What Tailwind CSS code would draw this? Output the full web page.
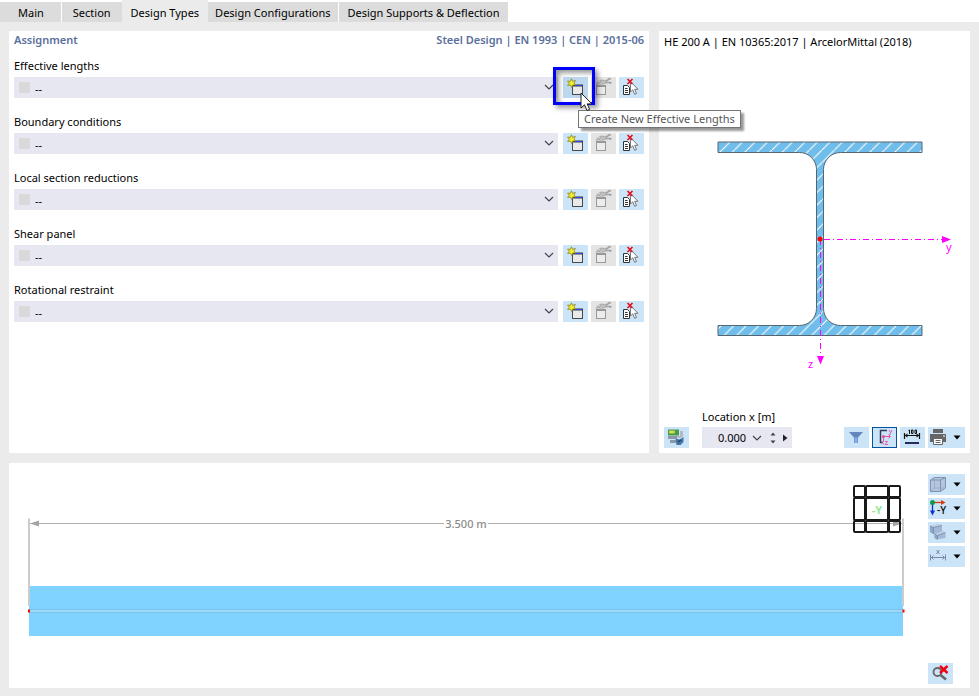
<!DOCTYPE html>
<html lang="en">
<head>
<meta charset="utf-8"/>
<meta name="viewport" content="width=device-width, initial-scale=1"/>
<title>Edit Member - Design Types</title>
<script src="https://cdn.jsdelivr.net/npm/@tailwindcss/browser@4"></script>
</head>
<body class="flex min-h-screen flex-col bg-[#ebebeb] font-['Noto_Sans','Open_Sans',sans-serif] text-[11px] leading-4 text-black">

<!-- shared icons -->
<svg class="hidden" xmlns="http://www.w3.org/2000/svg">
  <symbol id="i-new" viewBox="0 0 25 21">
    <rect x="9.5" y="8.5" width="10" height="9" fill="#e9e9e9" stroke="#4a4a4a"/>
    <path d="M9 8.500h11" stroke="#3a3a4a" stroke-width="2"/>
    <path d="M12 8.500h7" stroke="#3048d8"/>
    <path d="M8.500 1.800l1.100 2.600 2.800-1-1.400 2.600 1.800 2-2.900-.1-1.200 2.600-1.200-2.500-2.900.5 1.700-2.300-1.800-2.200 2.900.4z" fill="#f8f020" stroke="#85852a" stroke-width=".8"/>
  </symbol>
  <symbol id="i-edit" viewBox="0 0 25 21">
    <rect x="5.5" y="9.5" width="9" height="8" fill="#ececec" stroke="#9a9a9a"/>
    <path d="M5 9h10" stroke="#999" stroke-width="2"/>
    <path d="M4.500 7.500l2-3 3.500-2 3.500.6 2 1v2l-2.500 1.400H6z" fill="#b0b0b0"/>
    <path d="M14.500 3.500h2l1-1.500h2.500M15 5.500h4.500v1.500" stroke="#a0a0a0" stroke-width="1.500" fill="none"/>
    <path d="M7 6l2-2M9.500 6.500l2-2.500M12 6.500l1.500-2" stroke="#e6e6e6" stroke-width=".8"/>
  </symbol>
  <symbol id="i-remove" viewBox="0 0 25 21">
    <path d="M4.500 8.500h4l2 2v7h-6z" fill="#fff" stroke="#333"/>
    <path d="M6 11.500h2.500M6 13.500h3M6 15.500h3" stroke="#333"/>
    <path d="M11.500 4.500v10.500l2.300-2.200 1.800 4.500 1.900-.8-1.800-4.200h3.300z" fill="#fff" stroke="#777"/>
    <path d="M8.500 2l5 5M13.500 2l-5 5" stroke="#e01020" stroke-width="1.700"/>
  </symbol>
  <symbol id="i-chevron" viewBox="0 0 10 6">
    <path d="M1 1l4 4 4-4" fill="none" stroke="#444" stroke-width="1.200"/>
  </symbol>
  <symbol id="i-down" viewBox="0 0 8 5">
    <path d="M.500.500h7L4 4.500z" fill="#000"/>
  </symbol>
</svg>

<nav class="flex h-[22px] items-end gap-px bg-white">
  <a href="#" class="h-5 bg-[#dcdcdc] pr-[17px] pl-[18px] pt-[3px] whitespace-nowrap">Main</a>
  <a href="#" class="h-5 bg-[#dcdcdc] px-[11px] pt-[3px] whitespace-nowrap">Section</a>
  <a href="#" aria-current="page" class="-mx-px h-[22px] bg-[#ebebeb] px-[9px] pt-[5px] whitespace-nowrap">Design Types</a>
  <a href="#" class="h-5 bg-[#dcdcdc] px-[7px] pt-[3px] whitespace-nowrap">Design Configurations</a>
  <a href="#" class="h-5 bg-[#dcdcdc] px-[9px] pt-[3px] whitespace-nowrap">Design Supports &amp; Deflection</a>
</nav>

<main class="grid flex-1 grid-cols-[1fr_311px] grid-rows-[422px_1fr] gap-[10px] px-[9px] pt-[9px] pb-2">

  <section class="bg-white px-[5px]">
    <div class="flex h-6 justify-between font-semibold leading-[18px] text-[#5a6f9c]">
      <h2>Assignment</h2>
      <p>Steel Design | EN 1993 | CEN | 2015-06</p>
    </div>

    <div class="h-14">
      <label for="lengths" class="block h-[22px] leading-[22px]">Effective lengths</label>
      <div class="flex h-[21px] gap-[3px]">
        <div class="relative mr-[2px] flex-1">
          <select id="lengths" class="block h-[21px] w-full appearance-none bg-[#e7e7f2] pt-[2px] pl-[21px]"><option>--</option></select>
          <span class="pointer-events-none absolute top-[5px] left-[5px] size-[11px] bg-[#d9d9d9]"></span>
          <svg class="pointer-events-none absolute top-[7px] right-1 h-[6px] w-[10px]"><use href="#i-chevron"/></svg>
        </div>
        <div class="relative z-10">
          <button type="button" aria-label="Create New Effective Lengths" aria-describedby="tip" class="block h-[21px] w-[25px] bg-[#bdd8ee]"><svg class="h-[21px] w-[25px]"><use href="#i-new"/></svg></button>
          <span class="pointer-events-none absolute -top-[10px] -right-[7px] -bottom-[7px] -left-[10px] border-3 border-[#0000fa] shadow-[3px_3px_5px_rgba(0,0,0,0.4),inset_3px_3px_5px_rgba(0,0,0,0.4)]"></span>
          <span id="tip" role="tooltip" class="absolute top-[33px] left-[15px] border border-[#767676] bg-white px-[5px] leading-4 whitespace-nowrap text-[#575757] shadow-[3px_3px_2px_rgba(0,0,0,0.4)]">Create New Effective Lengths</span>
          <svg class="pointer-events-none absolute top-[15px] left-[17px] h-5 w-[14px]" viewBox="0 0 14 20"><path d="M1 1v15l3.500-3.200L7 18.500l2.600-1.100-2.400-5.500H12z" fill="#fff" stroke="#222"/></svg>
        </div>
        <button type="button" aria-label="Edit effective lengths" disabled class="h-[21px] w-[25px] bg-[#e4e4e4]"><svg class="h-[21px] w-[25px]"><use href="#i-edit"/></svg></button>
        <button type="button" aria-label="Remove effective lengths" class="h-[21px] w-[25px] bg-[#cce4f7]"><svg class="h-[21px] w-[25px]"><use href="#i-remove"/></svg></button>
      </div>
    </div>

    <div class="h-14">
      <label for="boundary" class="block h-[22px] leading-[22px]">Boundary conditions</label>
      <div class="flex h-[21px] gap-[3px]">
        <div class="relative mr-[2px] flex-1">
          <select id="boundary" class="block h-[21px] w-full appearance-none bg-[#e7e7f2] pt-[2px] pl-[21px]"><option>--</option></select>
          <span class="pointer-events-none absolute top-[5px] left-[5px] size-[11px] bg-[#d9d9d9]"></span>
          <svg class="pointer-events-none absolute top-[7px] right-1 h-[6px] w-[10px]"><use href="#i-chevron"/></svg>
        </div>
        <button type="button" aria-label="New boundary conditions" class="h-[21px] w-[25px] bg-[#cce4f7]"><svg class="h-[21px] w-[25px]"><use href="#i-new"/></svg></button>
        <button type="button" aria-label="Edit boundary conditions" disabled class="h-[21px] w-[25px] bg-[#e4e4e4]"><svg class="h-[21px] w-[25px]"><use href="#i-edit"/></svg></button>
        <button type="button" aria-label="Remove boundary conditions" class="h-[21px] w-[25px] bg-[#cce4f7]"><svg class="h-[21px] w-[25px]"><use href="#i-remove"/></svg></button>
      </div>
    </div>

    <div class="h-14">
      <label for="reductions" class="block h-[22px] leading-[22px]">Local section reductions</label>
      <div class="flex h-[21px] gap-[3px]">
        <div class="relative mr-[2px] flex-1">
          <select id="reductions" class="block h-[21px] w-full appearance-none bg-[#e7e7f2] pt-[2px] pl-[21px]"><option>--</option></select>
          <span class="pointer-events-none absolute top-[5px] left-[5px] size-[11px] bg-[#d9d9d9]"></span>
          <svg class="pointer-events-none absolute top-[7px] right-1 h-[6px] w-[10px]"><use href="#i-chevron"/></svg>
        </div>
        <button type="button" aria-label="New local section reductions" class="h-[21px] w-[25px] bg-[#cce4f7]"><svg class="h-[21px] w-[25px]"><use href="#i-new"/></svg></button>
        <button type="button" aria-label="Edit local section reductions" disabled class="h-[21px] w-[25px] bg-[#e4e4e4]"><svg class="h-[21px] w-[25px]"><use href="#i-edit"/></svg></button>
        <button type="button" aria-label="Remove local section reductions" class="h-[21px] w-[25px] bg-[#cce4f7]"><svg class="h-[21px] w-[25px]"><use href="#i-remove"/></svg></button>
      </div>
    </div>

    <div class="h-14">
      <label for="shear" class="block h-[22px] leading-[22px]">Shear panel</label>
      <div class="flex h-[21px] gap-[3px]">
        <div class="relative mr-[2px] flex-1">
          <select id="shear" class="block h-[21px] w-full appearance-none bg-[#e7e7f2] pt-[2px] pl-[21px]"><option>--</option></select>
          <span class="pointer-events-none absolute top-[5px] left-[5px] size-[11px] bg-[#d9d9d9]"></span>
          <svg class="pointer-events-none absolute top-[7px] right-1 h-[6px] w-[10px]"><use href="#i-chevron"/></svg>
        </div>
        <button type="button" aria-label="New shear panel" class="h-[21px] w-[25px] bg-[#cce4f7]"><svg class="h-[21px] w-[25px]"><use href="#i-new"/></svg></button>
        <button type="button" aria-label="Edit shear panel" disabled class="h-[21px] w-[25px] bg-[#e4e4e4]"><svg class="h-[21px] w-[25px]"><use href="#i-edit"/></svg></button>
        <button type="button" aria-label="Remove shear panel" class="h-[21px] w-[25px] bg-[#cce4f7]"><svg class="h-[21px] w-[25px]"><use href="#i-remove"/></svg></button>
      </div>
    </div>

    <div class="h-14">
      <label for="restraint" class="block h-[22px] leading-[22px]">Rotational restraint</label>
      <div class="flex h-[21px] gap-[3px]">
        <div class="relative mr-[2px] flex-1">
          <select id="restraint" class="block h-[21px] w-full appearance-none bg-[#e7e7f2] pt-[2px] pl-[21px]"><option>--</option></select>
          <span class="pointer-events-none absolute top-[5px] left-[5px] size-[11px] bg-[#d9d9d9]"></span>
          <svg class="pointer-events-none absolute top-[7px] right-1 h-[6px] w-[10px]"><use href="#i-chevron"/></svg>
        </div>
        <button type="button" aria-label="New rotational restraint" class="h-[21px] w-[25px] bg-[#cce4f7]"><svg class="h-[21px] w-[25px]"><use href="#i-new"/></svg></button>
        <button type="button" aria-label="Edit rotational restraint" disabled class="h-[21px] w-[25px] bg-[#e4e4e4]"><svg class="h-[21px] w-[25px]"><use href="#i-edit"/></svg></button>
        <button type="button" aria-label="Remove rotational restraint" class="h-[21px] w-[25px] bg-[#cce4f7]"><svg class="h-[21px] w-[25px]"><use href="#i-remove"/></svg></button>
      </div>
    </div>
  </section>

  <section class="flex flex-col bg-white px-[5px] pb-[5px]">
    <h2 class="h-[22px] leading-[22px]">HE 200 A | EN 10365:2017 | ArcelorMittal (2018)</h2>

    <!-- cross-section -->
    <svg class="min-h-0 w-full flex-1" viewBox="664 53 301 354" fill="none">
      <defs>
        <pattern id="hatch" x="9.500" y="0" width="12.500" height="12.500" patternUnits="userSpaceOnUse">
          <rect width="12.500" height="12.500" fill="#6fbdea"/>
          <path d="M-1 13.500L13.500-1" stroke="#fff" stroke-width="1.100"/>
        </pattern>
      </defs>
      <path d="M718 142h204v10.500H840.500a17 17 0 0 0-17 17V308.500a17 17 0 0 0 17 17H922V335.500H718V325.500h81.500a17 17 0 0 0 17-17V169.500a17 17 0 0 0-17-17H718z" fill="url(#hatch)" stroke="#566670"/>
      <path d="M824 239.500h120" stroke="#f0f" stroke-dasharray="6 3 1 3"/>
      <path d="M820.500 239v118" stroke="#f0f" stroke-dasharray="6 3 1 3"/>
      <path d="M942 236l9 3.500-9 3.500zM817 356h7l-3.500 8.500z" fill="#f0f"/>
      <circle cx="820" cy="239" r="2.500" fill="#f00"/>
      <g class="text-[11px]" fill="#f0f"><text x="946" y="251">y</text><text x="808" y="368">z</text></g>
    </svg>

    <div class="flex items-end">
      <button type="button" aria-label="Section values" class="h-[21px] w-[25px] bg-[#cce4f7]">
        <svg class="h-[21px] w-[25px]" viewBox="0 0 25 21"><path d="M4 2.500h11v6H4z" fill="#4a9a4a"/><path d="M5 3.500h6v3H5z" fill="#b6d45a"/><path d="M6 5h3" stroke="#e9db43" stroke-width="2"/><path d="M4 9h9v3H4zM6 13h6v3H6z" fill="#8b98a5"/><path d="M16 4h3v6h-3zM13 9h4v2h-4z" fill="#aebac6"/><path d="M11.500 11.500l4 1 4-2.500v5l-3 3h-4z" fill="#4675aa"/><path d="M14 15l3-2" stroke="#1d3f6b" stroke-width="1.500"/></svg>
      </button>
      <div class="ml-[13px]">
        <label for="location" class="block h-5 leading-5">Location x [m]</label>
        <div class="flex h-[21px] w-[90px] items-center bg-[#e7e7f2]">
          <input id="location" type="text" value="0.000" autofocus class="w-12 pl-4 pt-px outline-none"/>
          <button type="button" aria-label="Choose location" class="ml-[2px]"><svg class="h-[6px] w-[10px]"><use href="#i-chevron"/></svg></button>
          <button type="button" aria-label="Step location" class="ml-[7px]"><svg class="h-[14px] w-2" viewBox="0 0 8 14"><path d="M4 1.500L6.500 4.500h-5zM4 12.500L1.500 9.500h5z" fill="#444"/></svg></button>
          <button type="button" aria-label="Next location" class="ml-[5px]"><svg class="h-2 w-[6px]" viewBox="0 0 6 8"><path d="M1 .500l4.500 3.500L1 7.500z" fill="#222"/></svg></button>
        </div>
      </div>
      <div class="ml-auto flex gap-[3px]">
        <button type="button" aria-label="Filter" class="h-[21px] w-[25px] bg-[#cce4f7]">
          <svg class="h-[21px] w-[25px]" viewBox="0 0 25 21"><path d="M5 5h14l-5 5.500V16h-4v-5.500z" fill="#6487bd"/><path d="M10.500 10.500h3V16h-3z" fill="#8dace6"/></svg>
        </button>
        <button type="button" aria-label="Show axes" aria-pressed="true" class="h-[21px] w-[25px] border border-[#0054a0] bg-[#cce4f7]">
          <svg class="h-[19px] w-[23px]" viewBox="1 1 23 19" fill="none"><path d="M15 3.500H8.500v12H11" stroke="#333a60" stroke-width="1.500"/><path d="M11.500 15V9.500H18M16.500 7.500l2 2-2 2" stroke="#e0559c"/><circle cx="11.500" cy="9.500" r="1.600" fill="#e0559c"/><path d="M17 3l1.500 2.500M20 3l-2.500 5M10 14.500l1.500 3M13 14.500h2.500l-2.500 3h3" stroke="#e0559c" stroke-width=".9"/></svg>
        </button>
        <button type="button" aria-label="Show dimensions" class="h-[21px] w-[25px] bg-[#cce4f7]">
          <svg class="h-[21px] w-[25px]" viewBox="0 0 25 21" fill="none"><path d="M5 8.500h14M4.500 6v6M19.500 6v6" stroke="#111" stroke-width="1.200"/><path d="M4.500 8.500l3-2v4zM19.500 8.500l-3-2v4z" fill="#111"/><path d="M5 16h14" stroke="#262a5c" stroke-width="2"/><path d="M8.500 3.500l1-.5v4M11.500 3H13v3.500h-1.500zM15 3h1.500v3.500H15z" stroke="#111"/></svg>
        </button>
        <button type="button" aria-label="Print" aria-haspopup="menu" class="flex h-[21px] w-[37px] items-center bg-[#cce4f7]">
          <svg class="h-[21px] w-[25px]" viewBox="0 0 25 21"><path d="M5 2h10v4H5zM2 7h16v8h-3v-3H5v3H2z" fill="#666"/><path d="M5.500 11.500h9v6h-9z" fill="#fff" stroke="#666"/><path d="M7.500 13.500h5M7.500 15.500h5" stroke="#666"/><path d="M15 9h2" stroke="#fff"/></svg>
          <svg class="h-[5px] w-2"><use href="#i-down"/></svg>
        </button>
      </div>
    </div>
  </section>

  <section class="col-span-2 flex bg-white pr-[5px]">
    <!-- member view -->
    <svg class="h-[225px] min-w-0 flex-1" viewBox="9 463 919 225" fill="none">
      <path d="M29 586h874v50H29z" fill="#80d2ff"/>
      <path d="M29 609.500h874M29 612.500h874" stroke="#76c3ee"/>
      <path d="M29 611h874" stroke="#a0d8fa" stroke-width="2"/>
      <path d="M29 518.500V606M903 518.500V606" stroke="#ccc" stroke-width="2"/>
      <path d="M30 523.500h414M488 523.500h414" stroke="#b0b0b0"/>
      <path d="M30 523.500l9-3v6zM902 523.500l-9-3v6z" fill="#a3a3a8"/>
      <text x="466" y="528" text-anchor="middle" class="text-[11px] font-medium" fill="#8c8c8c">3.500 m</text>
      <path d="M28 609.500h2v3h-2zM902.500 609.500h2v3h-2z" fill="#f00"/>
      <!-- navigation cube -->
      <g stroke="#1a1a1a" stroke-width="2">
        <rect x="854" y="486" width="11" height="11" rx="1"/>
        <rect x="866" y="486" width="22" height="11" rx="1"/>
        <rect x="889" y="486" width="11" height="11" rx="1"/>
        <rect x="854" y="498" width="11" height="22" rx="1"/>
        <rect x="866" y="498" width="22" height="22" rx="1"/>
        <rect x="889" y="498" width="11" height="22" rx="1"/>
        <rect x="854" y="521" width="11" height="11" rx="1"/>
        <rect x="866" y="521" width="22" height="11" rx="1"/>
        <rect x="889" y="521" width="11" height="11" rx="1"/>
      </g>
      <text x="877" y="514" text-anchor="middle" class="text-[11px] font-bold" fill="#98e898">-Y</text>
    </svg>

    <div class="flex flex-col gap-[3px] pt-[11px] pb-1">
      <button type="button" aria-label="Display mode" aria-haspopup="menu" class="flex h-[21px] w-[37px] items-center bg-[#cce4f7]">
        <svg class="h-[21px] w-[25px]" viewBox="0 0 25 21"><path d="M2.500 6l4-2.500h11V14L12.500 17.500h-10z" fill="#b3c5df"/><path d="M2.500 6h10v11.500h-10zM2.500 6l4-2.500h11l-5 2.500M17.500 3.500V14l-5 3.500" fill="none" stroke="#8091b0"/><path d="M6.500 3.500V14h11M2.500 17.500l4-3.500" fill="none" stroke="#94a5c2" stroke-width=".7"/></svg>
        <svg class="h-[5px] w-2"><use href="#i-down"/></svg>
      </button>
      <button type="button" aria-label="View in -Y" aria-haspopup="menu" class="flex h-[21px] w-[37px] items-center bg-[#cce4f7]">
        <svg class="h-[21px] w-[25px]" viewBox="0 0 25 21"><path d="M4.500 4.500H14" stroke="#d93a0c" stroke-width="1.300"/><path d="M13 2l4.500 2.500L13 7z" fill="#d93a0c"/><path d="M4.500 5v8" stroke="#0a32d0" stroke-width="1.300"/><path d="M2 12.500h5l-2.500 5z" fill="#0a32d0"/><circle cx="4.500" cy="4.500" r="2.500" fill="#0d9a50"/><text x="9" y="16" class="text-[10px] font-medium">-Y</text></svg>
        <svg class="h-[5px] w-2"><use href="#i-down"/></svg>
      </button>
      <button type="button" aria-label="Solid model" aria-haspopup="menu" class="flex h-[21px] w-[37px] items-center bg-[#cce4f7]">
        <svg class="h-[21px] w-[25px]" viewBox="0 0 25 21"><path d="M2 4l9-2 3 1.500V9l3.500 1.500V16L8.500 17.500l-2-1.500v-3.500L2 10z" fill="#a3b8d6"/><path d="M2 4l3.500 1.500V12L2 10zM6.500 12.500l3 1.500v3.500l-3-1.500z" fill="#8fa5c6"/><path d="M2 4l9-2 3 1.500-8.500 2zM6.500 12l7.500-2.500 3.500 1L9.500 13.500z" fill="#c3d2e8"/><path d="M2 4l3.500 1.500 8.500-2M5.500 5.500V12M6.500 12l3 1.500 8-3M9.500 13.500v4" fill="none" stroke="#7488aa" stroke-width=".8"/></svg>
        <svg class="h-[5px] w-2"><use href="#i-down"/></svg>
      </button>
      <button type="button" aria-label="Dimensions" aria-haspopup="menu" class="flex h-[21px] w-[37px] items-center bg-[#cce4f7]">
        <svg class="h-[21px] w-[25px]" viewBox="0 0 25 21" fill="none" stroke="#7c8aa8"><path d="M2.500 8.500v6M17.500 8.500v6M3 11.500h14M5.500 9.500l-2 2 2 2M14.500 9.500l2 2-2 2M8.500 4l3 4M11.500 4l-3 4"/></svg>
        <svg class="h-[5px] w-2"><use href="#i-down"/></svg>
      </button>
      <button type="button" aria-label="Reset zoom" class="mt-auto h-[21px] w-[25px] bg-[#cce4f7]">
        <svg class="h-[21px] w-[25px]" viewBox="0 0 25 21" fill="none"><circle cx="9.500" cy="9" r="4" stroke="#666" stroke-width="1.800"/><path d="M12.500 12l5.500 4.500" stroke="#666" stroke-width="2.500"/><path d="M12 3l7.500 7M19.500 3L12 10" stroke="#f00010" stroke-width="2.400"/></svg>
      </button>
    </div>
  </section>
</main>
</body>
</html>
